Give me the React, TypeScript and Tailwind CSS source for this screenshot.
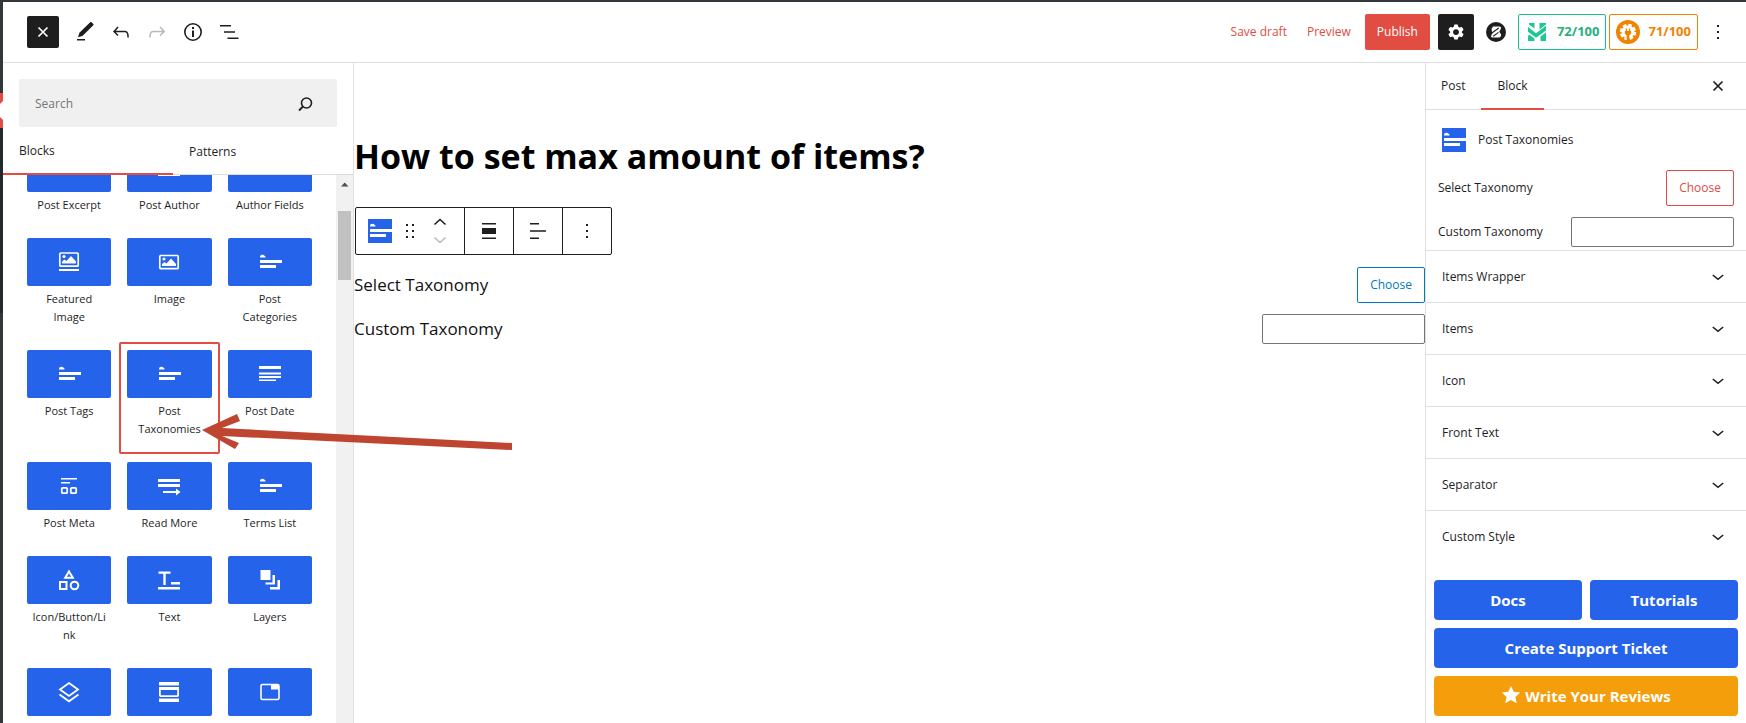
import React from "react";

type P = { children?: React.ReactNode; className?: string; size?: number; box?: string };
const Svg = ({ children, className = "", size = 24, box = "0 0 24 24" }: P) => (
  <svg width={size} height={size} viewBox={box} fill="currentColor" className={`shrink-0 ${className}`} aria-hidden="true">
    {children}
  </svg>
);

const Lines = () => (
  <>
    <path d="M2 7.500C2 5.500 3 4.800 4.500 4.800 6.500 4.800 6 5.800 7.500 6.500V7.500H2Z" />
    <path d="M2 10h22v3H2zM2 15h16v3H2z" />
  </>
);
const Picture = ({ y = 0 }: { y?: number }) => (
  <g transform={`translate(0 ${y})`}>
    <rect x="2.800" y="5.500" width="18.400" height="13.200" rx="1" fill="none" stroke="currentColor" strokeWidth="1.700" />
    <circle cx="7" cy="9" r="1.600" />
    <path d="M5 16v-2l2.500-2 2 1.500L14 8.500l5 5.500v2z" />
  </g>
);

const icons: Record<string, React.ReactNode> = {
  none: null,
  author: <path d="M1 17.500h22v2.500H1z" />,
  lines: <Lines />,
  featured: (
    <>
      <Picture y={-2.5} />
      <path d="M2 19h20v2H2z" />
    </>
  ),
  image: <Picture />,
  date: <path d="M1 4h22v3H1zM1 10.500h22v2H1zM1 14h22v2H1zM1 17.500h17v1.500H1z" />,
  meta: (
    <>
      <path d="M4 4h16v1.500H4zM4 8h9v1.500H4z" />
      <rect x="4.800" y="13.800" width="5.400" height="5.400" rx="1" fill="none" stroke="currentColor" strokeWidth="1.800" />
      <rect x="13.800" y="13.800" width="5.400" height="5.400" rx="1" fill="none" stroke="currentColor" strokeWidth="1.800" />
    </>
  ),
  more: <path d="M1 5h22v3H1zM1 10h22v3H1zM6 17h13v-2.500l4.500 3.500-4.500 3.500V19H6z" />,
  shapes: (
    <g fill="none" stroke="currentColor" strokeWidth="2">
      <path d="M12 3.500 15.800 9.800H8.200z" />
      <path d="M3 14h6.500v7H3z" />
      <circle cx="17.500" cy="17.500" r="3.800" />
    </g>
  ),
  text: <path d="M1.500 3.500h12v2.200H8.700V17H6.300V5.700H1.500zM14 14h9v2.500h-9zM1 19h22v2.500H1z" />,
  layers: <path d="M2.500 2h10v10h-10zM14.500 7H17v9.500H7.500V14.500h7zM19.500 12H22v9.500H12v-2.500h7.500z" />,
  stack: (
    <g fill="none" stroke="currentColor" strokeWidth="1.800">
      <path d="M12 3 21 9.500 12 16 3 9.500z" />
      <path d="M2.500 14.500 12 21.300l9.500-6.800" />
    </g>
  ),
  slider: (
    <>
      <path d="M2 2h20v3.500H2zM2 18.500h20V22H2z" />
      <rect x="2.900" y="7.800" width="18.200" height="8.400" rx="1" fill="none" stroke="currentColor" strokeWidth="1.800" />
      <path d="M2 7h20v3H2z" />
    </>
  ),
  tabs: (
    <>
      <rect x="3" y="4.500" width="18" height="15" rx="1.500" fill="none" stroke="currentColor" strokeWidth="1.600" />
      <path d="M13 4.500h8v5h-8z" />
    </>
  ),
};

const blocks = [
  ["Post Excerpt", "none"], ["Post Author", "author"], ["Author Fields", "none"],
  ["Featured Image", "featured"], ["Image", "image"], ["Post Categories", "lines"],
  ["Post Tags", "lines"], ["Post Taxonomies", "lines"], ["Post Date", "date"],
  ["Post Meta", "meta"], ["Read More", "more"], ["Terms List", "lines"],
  ["Icon/Button/Link", "shapes"], ["Text", "text"], ["Layers", "layers"],
  ["", "stack"], ["", "slider"], ["", "tabs"],
];

const Close = () => (
  <Svg>
    <path d="m7.500 7.500 9 9M16.500 7.500l-9 9" fill="none" stroke="currentColor" strokeWidth="1.700" />
  </Svg>
);
const Dots = () => (
  <Svg>
    <path d="M11 5h2v2h-2zM11 11h2v2h-2zM11 17h2v2h-2z" />
  </Svg>
);
const Chevron = () => (
  <Svg>
    <path d="m6.800 10 5.200 4.300 5.200-4.300" fill="none" stroke="currentColor" strokeWidth="1.600" />
  </Svg>
);

const Header = () => (
  <header className="flex h-[61px] shrink-0 items-center justify-between border-b border-[#e0e0e0] pr-4 pl-6">
    <div className="flex items-center gap-3">
      <button aria-label="Close inserter" className="mr-0.5 flex size-8 items-center justify-center rounded-xs bg-[#1e1e1e] text-white">
        <Close />
      </button>
      <button aria-label="Tools">
        <Svg>
          <path d="M20.300 3.900 18.600 2.200c-.4-.4-1-.4-1.400 0L6.400 12.800 5 17.300l4.400-1.400L20.300 5.300c.4-.4.4-1 0-1.400zM4 18.900h8v1.700H4z" />
        </Svg>
      </button>
      <button aria-label="Undo">
        <Svg>
          <path d="M18.300 11.700c-.6-.6-1.400-.9-2.300-.9H6.700l2.900-3.300-1.100-1-4.500 5L8.500 16l1-1-2.700-2.700H16c.5 0 .9.200 1.300.5 1 1 1 3.400 1 4.500v.3h1.500v-.2c0-1.500 0-4.300-1.500-5.700z" />
        </Svg>
      </button>
      <button aria-label="Redo" className="text-[#b9b9b9]">
        <Svg>
          <path d="M15.600 6.500l-1.100 1 2.900 3.300H8c-.9 0-1.700.3-2.300.9-1.400 1.500-1.400 4.200-1.400 5.600v.2h1.500v-.3c0-1.100 0-3.500 1-4.500.3-.3.700-.5 1.300-.5h9.200L14.500 15l1.100 1.100 4.600-4.600-4.600-5z" />
        </Svg>
      </button>
      <button aria-label="Details">
        <Svg>
          <circle cx="12" cy="12" r="8.200" fill="none" stroke="currentColor" strokeWidth="1.600" />
          <path d="M11 7h2v2h-2zM11 10.500h2V17h-2z" />
        </Svg>
      </button>
      <button aria-label="List view">
        <Svg>
          <path d="M3 5h11v1.600H3zM7 11.200h11v1.600H7zM10.500 17.400H21.500V19h-11z" />
        </Svg>
      </button>
    </div>
    <div className="flex items-center text-xs text-[#e14d43]">
      <button className="mr-5">Save draft</button>
      <button className="mr-3.5">Preview</button>
      <button className="mr-2 h-9 rounded-xs bg-[#e14d43] px-3 text-white">Publish</button>
      <button aria-label="Settings" className="flex size-9 items-center justify-center rounded-xs bg-[#1e1e1e] text-white">
        <Svg>
          <path fillRule="evenodd" d="M10.300 4.500h3.400l.5 2.200 1.500.9 2.200-.7 1.700 2.900-1.700 1.600v1.300l1.700 1.600-1.700 2.900-2.200-.7-1.500.9-.5 2.200h-3.400l-.5-2.200-1.500-.9-2.200.7-1.700-2.900 1.700-1.600v-1.300L4.400 9.800l1.700-2.900 2.200.7 1.500-.9zM12 9.200a2.900 2.900 0 1 0 0 5.800 2.900 2.900 0 0 0 0-5.800z" />
        </Svg>
      </button>
      <button aria-label="Blocks kit" className="mx-2.5 text-[#1e1e1e]">
        <Svg>
          <circle cx="12" cy="12" r="10" />
          <path d="M9 6.500h6.500a1.600 1.600 0 0 1 1.400 2.300L15.200 11.700l.9 1.300a2.500 2.500 0 0 1-1.800 4.500H8.300a1.200 1.200 0 0 1-1-2L8.300 13.500 7.500 9z" fill="#fff" />
          <path d="m7.500 13.200 7.300-5.200M9.200 16.200l5.300-3.800" stroke="#1e1e1e" strokeWidth="1.100" />
        </Svg>
      </button>
      <button className="mr-[3px] flex h-9 items-center gap-2 rounded-xs border border-[#1fc08a] px-1.5 text-[13px] font-bold text-[#27b07d]">
        <Svg className="text-[#1fc694]">
          <path d="M4 3h5.500v5.500L4 4.500zM14.500 3H21v1.500L14.500 9.500zM3 7l8 6.200L21 5.800v4.700l-10 7.200-8-6zM4 14.500l5.500 4V21H3v-4.500zM21 12.500V21h-5.500v-4.500z" />
        </Svg>
        72/100
      </button>
      <button className="mr-2 flex h-9 items-center gap-2 rounded-xs border border-[#f08300] px-1.5 text-[13px] font-bold text-[#f08300]">
        <Svg>
          <circle cx="12" cy="12" r="12" />
          <circle cx="12" cy="12" r="6.500" fill="#fff" />
          <circle cx="12" cy="12" r="7" fill="none" stroke="#fff" strokeWidth="2.500" strokeDasharray="3.600 1.900" />
          <path d="M8.800 11h6.400v2.500l-1.900 2V21h-2.600v-5.500l-1.900-2zM9.800 8.500h1.200V11H9.800zM13 8.500h1.200V11H13z" />
        </Svg>
        71/100
      </button>
      <button aria-label="Options" className="text-[#1e1e1e]"><Dots /></button>
    </div>
  </header>
);

const Inserter = () => (
  <aside className="flex w-[351px] shrink-0 flex-col border-r border-[#e0e0e0]">
    <div className="px-4 pt-4">
      <label className="flex h-12 items-center rounded-xs bg-[#f0f0f0] px-4 pt-0.5">
        <input aria-label="Search" placeholder="Search" className="min-w-0 flex-1 bg-transparent text-xs outline-none placeholder:text-[#757575]" />
        <Svg className="mr-1">
          <circle cx="13.500" cy="11" r="5" fill="none" stroke="currentColor" strokeWidth="1.600" />
          <path d="m10 14.500-4 4" stroke="currentColor" strokeWidth="1.800" />
        </Svg>
      </label>
    </div>
    <div className="flex h-12 shrink-0 border-b border-[#ddd] text-xs font-medium">
      <button className="-mb-px w-[170px] border-b-2 border-[#e14d43] pt-0.5 pl-4 text-left">Blocks</button>
      <button className="pt-0.5 pl-4 text-left">Patterns</button>
    </div>
    <div className="flex min-h-0 flex-1">
      <div className="flex min-w-0 flex-1 flex-col justify-start overflow-hidden px-4">
        <div className="-mt-[39px] grid shrink-0 grid-cols-3">
          {blocks.map(([name, icon]) => (
            <button
              key={icon + name}
              aria-label={name || icon}
              className={`flex flex-col items-center justify-start px-2 pt-2 pb-4 ${name === "Post Taxonomies" ? "rounded-xs ring-2 ring-[#e14d43] ring-inset" : ""}`}
            >
              <span className="mb-1 flex h-12 w-full shrink-0 items-center justify-center rounded-xs bg-[#2563eb] text-white">
                <Svg>{icons[icon]}</Svg>
              </span>
              <span className="w-full px-1 text-center text-[11px] leading-[18px] break-words">{name}</span>
            </button>
          ))}
        </div>
      </div>
      <div className="flex w-[17px] shrink-0 flex-col bg-[#f1f1f1] px-0.5 pt-1.5" aria-hidden="true">
        <svg width="13" height="6" viewBox="0 0 13 6" fill="#505050"><path d="M3 5.500h7.500L6.700 1.500z" /></svg>
        <div className="mt-6 h-[69px] bg-[#c1c1c1]" />
      </div>
    </div>
  </aside>
);

const Editor = () => (
  <main className="min-w-0 flex-1">
    <h1 className="pt-[68px] text-[34px] leading-[50px] font-bold text-black">How to set max amount of items?</h1>
    <div className="mt-[26px] ml-px flex h-12 w-fit rounded-xs border border-[#1e1e1e]">
      <div className="flex w-[109px] items-center border-r border-[#1e1e1e] pl-3">
        <button aria-label="Post Taxonomies" className="bg-[#2563eb] text-white"><Svg><Lines /></Svg></button>
        <button aria-label="Drag" className="ml-1.5">
          <Svg><path d="M8 5h2v2H8zM8 11h2v2H8zM8 17h2v2H8zM14 5h2v2h-2zM14 11h2v2h-2zM14 17h2v2h-2z" /></Svg>
        </button>
        <div className="ml-1.5 flex flex-col">
          <button aria-label="Move up"><svg width="24" height="16" viewBox="0 0 24 16" fill="none" stroke="currentColor" strokeWidth="1.600"><path d="m6.500 9.500 5.500-5 5.500 5" /></svg></button>
          <button aria-label="Move down"><svg width="24" height="16" viewBox="0 0 24 16" fill="none" stroke="#bbb" strokeWidth="1.600"><path d="m6.500 6.500 5.500 5 5.500-5" /></svg></button>
        </div>
      </div>
      <button aria-label="Align" className="flex w-[49px] items-center justify-center border-r border-[#1e1e1e]">
        <Svg><path d="M5 4h14v1.600H5zM5 9h14v6H5zM5 18.400h14V20H5z" /></Svg>
      </button>
      <button aria-label="Align text" className="flex w-[49px] items-center justify-center border-r border-[#1e1e1e]">
        <Svg><path d="M4 4h9v1.600H4zM4 11.200h16v1.600H4zM4 18.400h9V20H4z" /></Svg>
      </button>
      <button aria-label="Options" className="flex w-12 items-center justify-center"><Dots /></button>
    </div>
    <div className="mt-3 flex items-center justify-between">
      <span className="text-[17px] text-[#111]">Select Taxonomy</span>
      <button className="h-9 rounded-xs border border-[#007cba] px-3 text-xs text-[#007cba]">Choose</button>
    </div>
    <div className="mt-[11px] flex items-center justify-between">
      <label htmlFor="main-tax" className="text-[17px] text-[#111]">Custom Taxonomy</label>
      <input id="main-tax" className="h-[30px] w-[163px] rounded-xs border border-[#757575] px-2 text-xs" />
    </div>
  </main>
);

const Sidebar = () => (
  <aside className="w-[321px] shrink-0 border-l border-[#e0e0e0] text-xs">
    <div className="flex h-[47px] border-b border-[#ddd] pr-4 font-medium">
      <button className="pr-4 pl-[15px]">Post</button>
      <button className="-mb-px border-b-2 border-[#e14d43] px-4">Block</button>
      <button aria-label="Close settings" className="ml-auto"><Close /></button>
    </div>
    <div className="flex items-center gap-3 px-4 pt-[18px] font-medium">
      <span className="bg-[#2563eb] text-white"><Svg><Lines /></Svg></span>
      Post Taxonomies
    </div>
    <div className="mt-[18px] flex items-center justify-between px-3">
      <span>Select Taxonomy</span>
      <button className="h-9 rounded-xs border border-[#e14d43] px-3 text-[#e14d43]">Choose</button>
    </div>
    <div className="mt-[11px] mb-[3px] flex items-center justify-between px-3">
      <label htmlFor="side-tax">Custom Taxonomy</label>
      <input id="side-tax" className="h-[30px] w-[163px] rounded-xs border border-[#757575] px-2" />
    </div>
    {["Items Wrapper", "Items", "Icon", "Front Text", "Separator", "Custom Style"].map((t) => (
      <button key={t} className="flex h-[52px] w-full items-center justify-between border-t border-[#e0e0e0] px-4 font-medium">
        {t}
        <Chevron />
      </button>
    ))}
    <div className="grid grid-cols-2 gap-2 px-2 pt-[18px] text-[15px] font-bold text-white">
      <a href="#docs" className="flex h-10 items-center justify-center rounded-sm bg-[#2563eb]">Docs</a>
      <a href="#tutorials" className="flex h-10 items-center justify-center rounded-sm bg-[#2563eb]">Tutorials</a>
      <a href="#support" className="col-span-2 flex h-10 items-center justify-center rounded-sm bg-[#2563eb]">Create Support Ticket</a>
      <a href="#reviews" className="col-span-2 flex h-10 items-center justify-center gap-1 rounded-sm bg-[#f59e0b]">
        <Svg size={20}><path d="m12 0 3.300 7 7.700.9-5.700 5.200 1.600 7.600L12 16.900l-6.900 3.800 1.600-7.600L1 7.900 8.700 7z" /></Svg>
        Write Your Reviews
      </a>
    </div>
  </aside>
);

export default function App() {
  return (
    <div className="relative flex h-screen flex-col overflow-hidden border-t-2 border-[#32373c] bg-white font-['Open_Sans','Noto_Sans',sans-serif] text-[#1e1e1e]">
      <div className="flex min-h-0 flex-1">
        <div className="flex w-[3px] shrink-0 flex-col bg-[#32373c]" aria-hidden="true">
          <div className="h-[91px]" />
          <svg width="3" height="35" viewBox="0 0 3 35"><path d="M0 0h3v35H0z" fill="#e14d43" /><path d="M0 11l3-3v19l-3-3z" fill="#fff" /></svg>
          <div className="h-[185px] bg-[#23282d]" />
        </div>
        <div className="flex min-w-0 flex-1 flex-col">
          <Header />
          <div className="flex min-h-0 flex-1">
            <Inserter />
            <Editor />
            <Sidebar />
          </div>
        </div>
      </div>
      <svg className="pointer-events-none absolute top-[408px] left-[198px]" width="320" height="50" viewBox="198 410 320 50" fill="#be4530" aria-hidden="true">
        <path d="M202 430 237 414 240 421 222 428 512 443V450L222 436 239 443 235 449Z" />
      </svg>
    </div>
  );
}
